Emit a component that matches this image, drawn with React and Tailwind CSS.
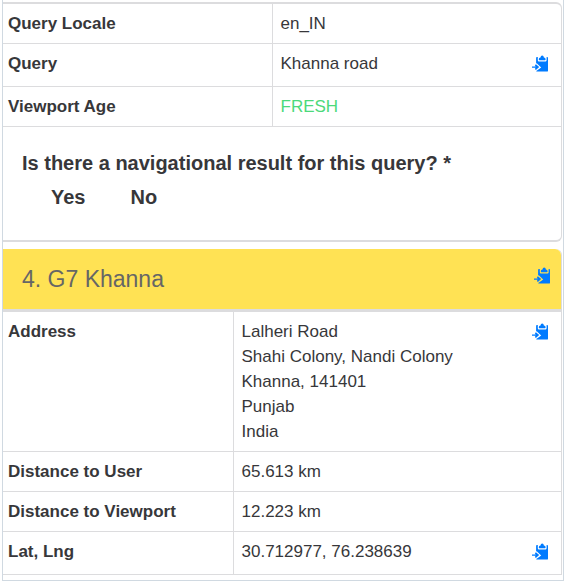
import { useState } from 'react'

const queryRows = [
  { label: 'Query Locale', value: 'en_IN' },
  { label: 'Query', value: 'Khanna road', copy: true },
  { label: 'Viewport Age', value: 'FRESH', fresh: true },
]

const resultRows = [
  {
    label: 'Address',
    lines: ['Lalheri Road', 'Shahi Colony, Nandi Colony', 'Khanna, 141401', 'Punjab', 'India'],
    copy: true,
  },
  { label: 'Distance to User', value: '65.613 km' },
  { label: 'Distance to Viewport', value: '12.223 km' },
  { label: 'Lat, Lng', value: '30.712977, 76.238639', copy: true },
]

const CopyButton = ({ text }) => (
  <button
    type="button"
    aria-label={`Copy ${text}`}
    onClick={() => navigator.clipboard?.writeText(text)}
    className="flex h-7 shrink-0 cursor-pointer items-start pt-1 text-[#007bff]"
  >
    <svg width="17" height="17" viewBox="0 0 17 17" fill="currentColor" aria-hidden="true">
      {/* Board, notched where the arrow points in */}
      <path d="M4.900 2h.9v3c0 1 .6 1.600 1.600 1.600h5.600c1 0 1.600-.6 1.600-1.600V2h.6c.5 0 .8.4.8.900v12.800c0 .5-.4.9-.9.900H5.100c-.5 0-.9-.3-.9-.700l.8-.3 4.200-3.200-4.200-3.900-.9-.3V2.900c0-.5.3-.9.800-.9z" />
      {/* Clip */}
      <path d="M6.800 4.600c0-1.400.6-2.200 1.700-2.200C8.700 1.200 9.300.4 10.200.4s1.500.8 1.700 2c1.100 0 1.700.8 1.700 2.200 0 .5-.2.700-.6.700H7.400c-.4 0-.6-.2-.6-.7z" />
      {/* Arrow */}
      <path d="M0 11.400h3.600L2.900 10.300l1-1.100 3.300 2.900-3.300 2.900-1-1.100.7-1.100H0z" />
    </svg>
  </button>
)

const Rows = ({ rows, labelClass }) => (
  <table className="w-full table-fixed text-left text-[17px] leading-[25px]">
    <tbody>
      {rows.map(({ label, value, lines, copy, fresh }) => (
        <tr key={label} className="border-b border-[#dcdcde]">
          <th scope="row" className={`border-r border-[#dcdcde] px-[5px] py-[7px] align-top font-bold ${labelClass}`}>
            {label}
          </th>
          <td className={`py-[7px] pr-3 pl-2 align-top ${fresh ? 'text-[#4cd97b]' : ''}`}>
            <div className="flex items-start justify-between">
              <div>
                {lines ? lines.map(line => <div key={line}>{line}</div>) : value}
              </div>
              {copy && <CopyButton text={lines ? lines.join(', ') : value} />}
            </div>
          </td>
        </tr>
      ))}
    </tbody>
  </table>
)

const App = () => {
  const [answer, setAnswer] = useState(null)

  return (
    <main className="bg-white pl-0.5 font-['Liberation_Sans',Arial,sans-serif] text-[#37373a]">
      <div className="border-x border-b border-[#d0d9e1] pt-0.5 pr-px pb-[5px]">
        <section className="rounded-r-md border-t-2 border-r border-b-2 border-[#dcdcde]">
          <Rows rows={queryRows} labelClass="w-[269px]" />
          <fieldset className="px-[19px] pt-5 pb-[29px]">
            <legend className="float-left w-full text-xl leading-8 font-bold">
              Is there a navigational result for this query? *
            </legend>
            <div className="clear-both flex gap-4 pt-1">
              {['Yes', 'No'].map(option => (
                <label key={option} className="flex cursor-pointer items-center text-xl leading-7 font-bold">
                  <input
                    type="radio"
                    name="navigational"
                    value={option}
                    checked={answer === option}
                    onChange={() => setAnswer(option)}
                    className="mr-3 size-[17px] appearance-none rounded-full checked:bg-[#007bff]"
                  />
                  {option}
                </label>
              ))}
            </div>
          </fieldset>
        </section>

        <section className="mt-[7px] rounded-tr-md border-r border-[#dcdcde]">
          <header className="flex items-start justify-between rounded-tr-md border-b-[3px] border-[#dcdcde] bg-[#ffe254] py-3 pr-2.5 pl-[19px]">
            <h2 className="text-[23px] leading-9 text-[#666666]">4. G7 Khanna</h2>
            <div className="pt-0.5">
              <CopyButton text="G7 Khanna" />
            </div>
          </header>
          <Rows rows={resultRows} labelClass="w-[230px]" />
        </section>
      </div>
    </main>
  )
}

export default App
